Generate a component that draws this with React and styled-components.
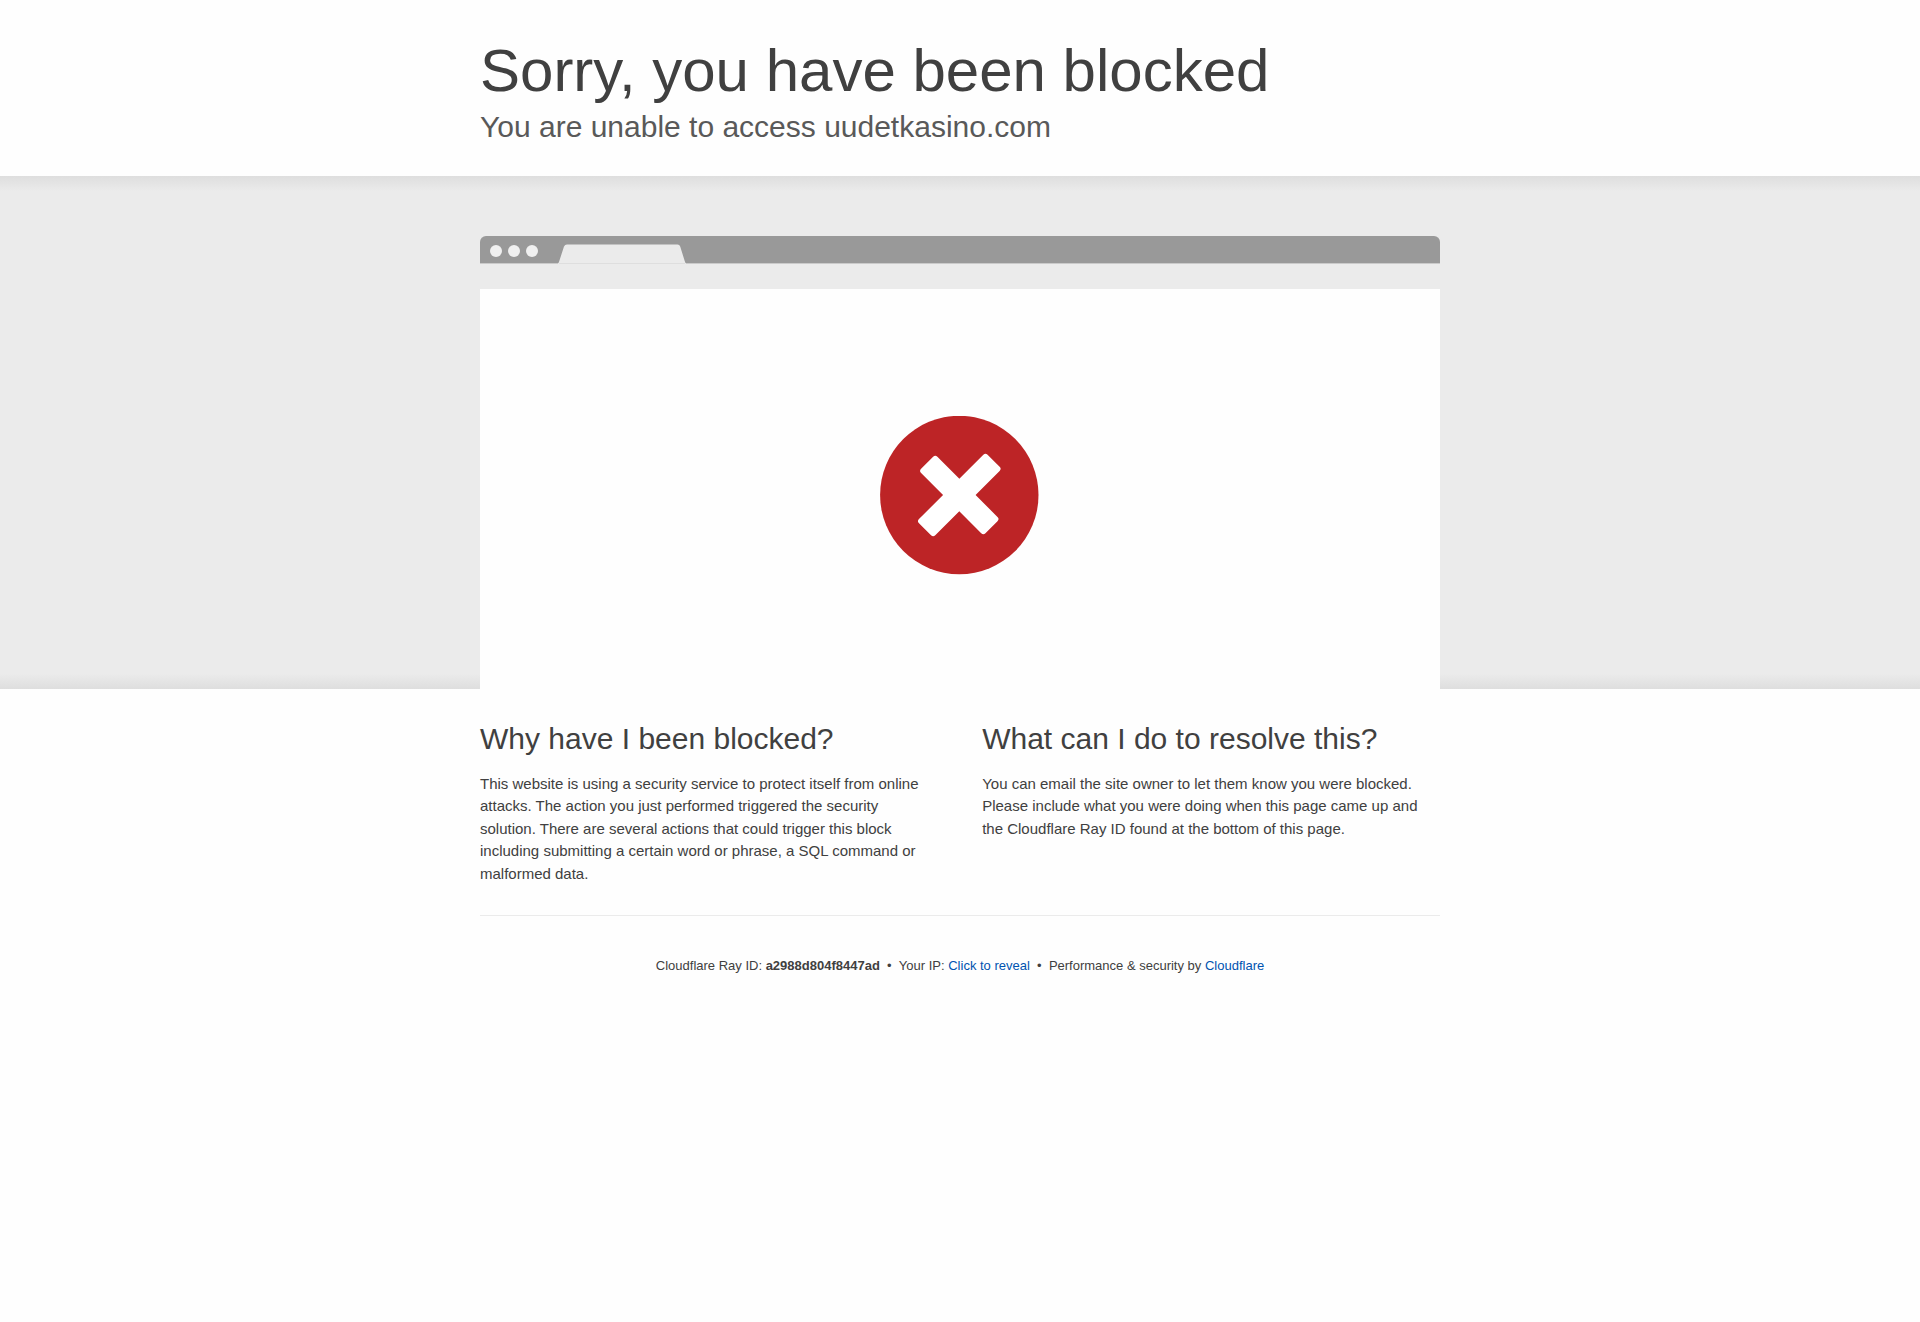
import React, { useState } from "react";
import styled, { createGlobalStyle } from "styled-components";

const GlobalStyle = createGlobalStyle`
  *, *::before, *::after { box-sizing: border-box; }
  body {
    margin: 0;
    background: #fefefe;
    color: #404040;
    font-family: "Liberation Sans", Arial, sans-serif;
    font-size: 15px;
    line-height: 1.5;
  }
  h1, h2, p { margin: 0; font-weight: 400; }
`;

const Wrapper = styled.div`
  width: 100%;
  max-width: 960px;
  margin: 0 auto;
`;

const Header = styled.header`
  padding: 35px 0 29px;
`;

const Title = styled.h1`
  font-size: 60px;
  line-height: 72px;
`;

const Heading = styled.h2`
  font-size: 30px;
  line-height: 1.25;
`;

const Subtitle = styled(Heading)`
  line-height: 40px;
  color: #595959;
`;

const Highlight = styled.section`
  padding-top: 60px;
  background: linear-gradient(#dedede, #ebebeb 3%, #ebebeb 97%, #dedede);
`;

const TitleBar = styled.div`
  display: flex;
  align-items: flex-end;
  height: 28px;
  padding-left: 10px;
  border-bottom: 1px solid #cacaca;
  border-radius: 6px 6px 0 0;
  background: #999;
`;

const Dots = styled.div`
  display: flex;
  gap: 6px;
  align-self: center;
  margin-right: 20px;
  padding-top: 3px;
`;

const Dot = styled.span`
  width: 12px;
  height: 12px;
  border-radius: 50%;
  background: #f0f0f0;
`;

const TabShape = styled.svg`
  display: block;
  margin-bottom: -1px;
`;

const AddressBar = styled.div`
  height: 25px;
  background: #ebebeb;
`;

const Viewport = styled.div`
  display: flex;
  justify-content: center;
  padding: 127px 0 113px;
  background: #fefefe;
`;

const BlockedIcon = styled.svg`
  display: block;
  width: 160px;
  height: 160px;
`;

const Columns = styled.div`
  display: grid;
  grid-template-columns: 47% 47%;
  gap: 51px;
  padding: 31px 0 30px;
`;

const Column = styled.section`
  display: flex;
  flex-direction: column;
  gap: 15px;
`;

const Footer = styled.footer`
  padding: 40px 0;
  border-top: 1px solid #ebebeb;
  font-size: 13px;
  line-height: 20px;
  text-align: center;
`;

const Link = styled.a`
  color: #0053b0;
  text-decoration: none;
`;

const RevealButton = styled.button`
  padding: 0;
  border: 0;
  background: none;
  color: #0053b0;
  font: inherit;
  cursor: pointer;
`;

const Separator = () => <span>{"\u00a0 \u2022 \u00a0"}</span>;

function BrowserWindow() {
  return (
    <Wrapper>
      <TitleBar>
        <Dots>
          <Dot />
          <Dot />
          <Dot />
        </Dots>
        <TabShape width="128" height="20" viewBox="0 0 128 20" aria-hidden="true">
          <path d="M0 19.500Q0.800 18.500 1.300 17L6 2.500Q6.800 0.500 9 0.500H119.500Q121.500 0.500 122.200 2.500L126.700 17Q127.200 18.500 128 19.500V20H0Z" fill="#ebebeb" />
          <path d="M1 19.500H127" stroke="#dedede" />
        </TabShape>
      </TitleBar>
      <AddressBar />
      <Viewport>
        <BlockedIcon viewBox="0 0 160 160" role="img" aria-label="Blocked">
          <circle cx="79.300" cy="79" r="79.200" fill="#bd2426" />
          <g fill="#fff" transform="translate(79.300 79)">
            <rect x="-48.500" y="-11.500" width="97" height="23" rx="3" transform="rotate(-45)" />
            <rect x="-45.500" y="-11.500" width="91" height="23" rx="3" transform="rotate(45)" />
          </g>
        </BlockedIcon>
      </Viewport>
    </Wrapper>
  );
}

export default function App() {
  const [revealed, setRevealed] = useState(false);
  return (
    <>
      <GlobalStyle />
      <Header>
        <Wrapper>
          <Title>Sorry, you have been blocked</Title>
          <Subtitle>You are unable to access uudetkasino.com</Subtitle>
        </Wrapper>
      </Header>
      <Highlight>
        <BrowserWindow />
      </Highlight>
      <Wrapper as="main">
        <Columns>
          <Column>
            <Heading>Why have I been blocked?</Heading>
            <p>
              This website is using a security service to protect itself from online attacks. The action you just
              performed triggered the security solution. There are several actions that could trigger this block
              including submitting a certain word or phrase, a SQL command or malformed data.
            </p>
          </Column>
          <Column>
            <Heading>What can I do to resolve this?</Heading>
            <p>
              You can email the site owner to let them know you were blocked. Please include what you were doing when
              this page came up and the Cloudflare Ray ID found at the bottom of this page.
            </p>
          </Column>
        </Columns>
        <Footer>
          Cloudflare Ray ID: <strong>a2988d804f8447ad</strong>
          <Separator />
          Your IP:{" "}
          {revealed ? (
            <span>127.0.0.1</span>
          ) : (
            <RevealButton type="button" onClick={() => setRevealed(true)}>
              Click to reveal
            </RevealButton>
          )}
          <Separator />
          Performance &amp; security by <Link href="#cloudflare">Cloudflare</Link>
        </Footer>
      </Wrapper>
    </>
  );
}
